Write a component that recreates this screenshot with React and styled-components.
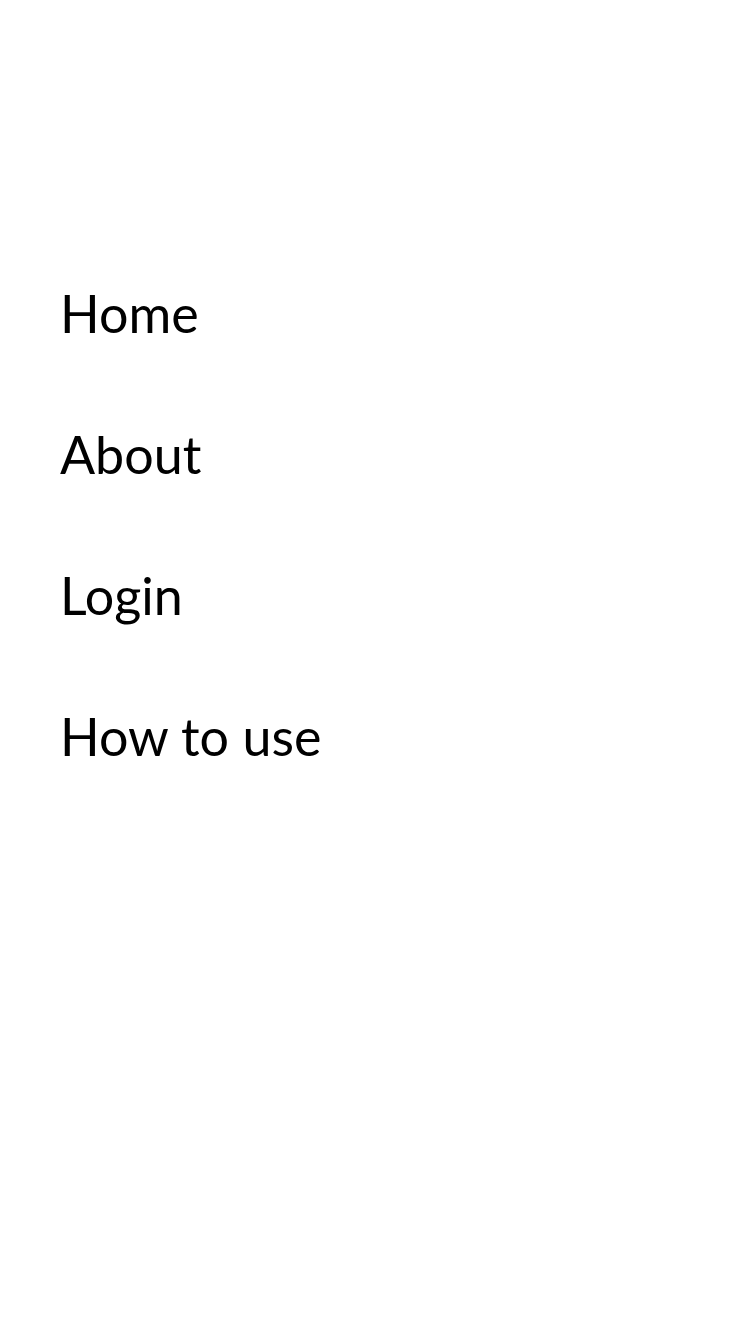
import React from 'react';
import styled, { createGlobalStyle } from 'styled-components';

const GlobalStyle = createGlobalStyle`
  html, body {
    margin: 0;
    padding: 0;
    background: #fff;
  }
`;

const Page = styled.div`
  min-height: 1334px;
  background: #fff;
`;

const Menu = styled.nav`
  display: flex;
  flex-direction: column;
  gap: 89px;
  padding: 287px 60px 0;
`;

const MenuLink = styled.a`
  font-family: Lato, 'Noto Sans', sans-serif;
  font-size: 52px;
  line-height: 52px;
  color: #000;
  text-decoration: none;
  cursor: pointer;
`;

const items = ['Home', 'About', 'Login', 'How to use'];

const App = () => (
  <Page>
    <GlobalStyle />
    <Menu>
      {items.map((item) => (
        <MenuLink key={item}>{item}</MenuLink>
      ))}
    </Menu>
  </Page>
);

export default App;
